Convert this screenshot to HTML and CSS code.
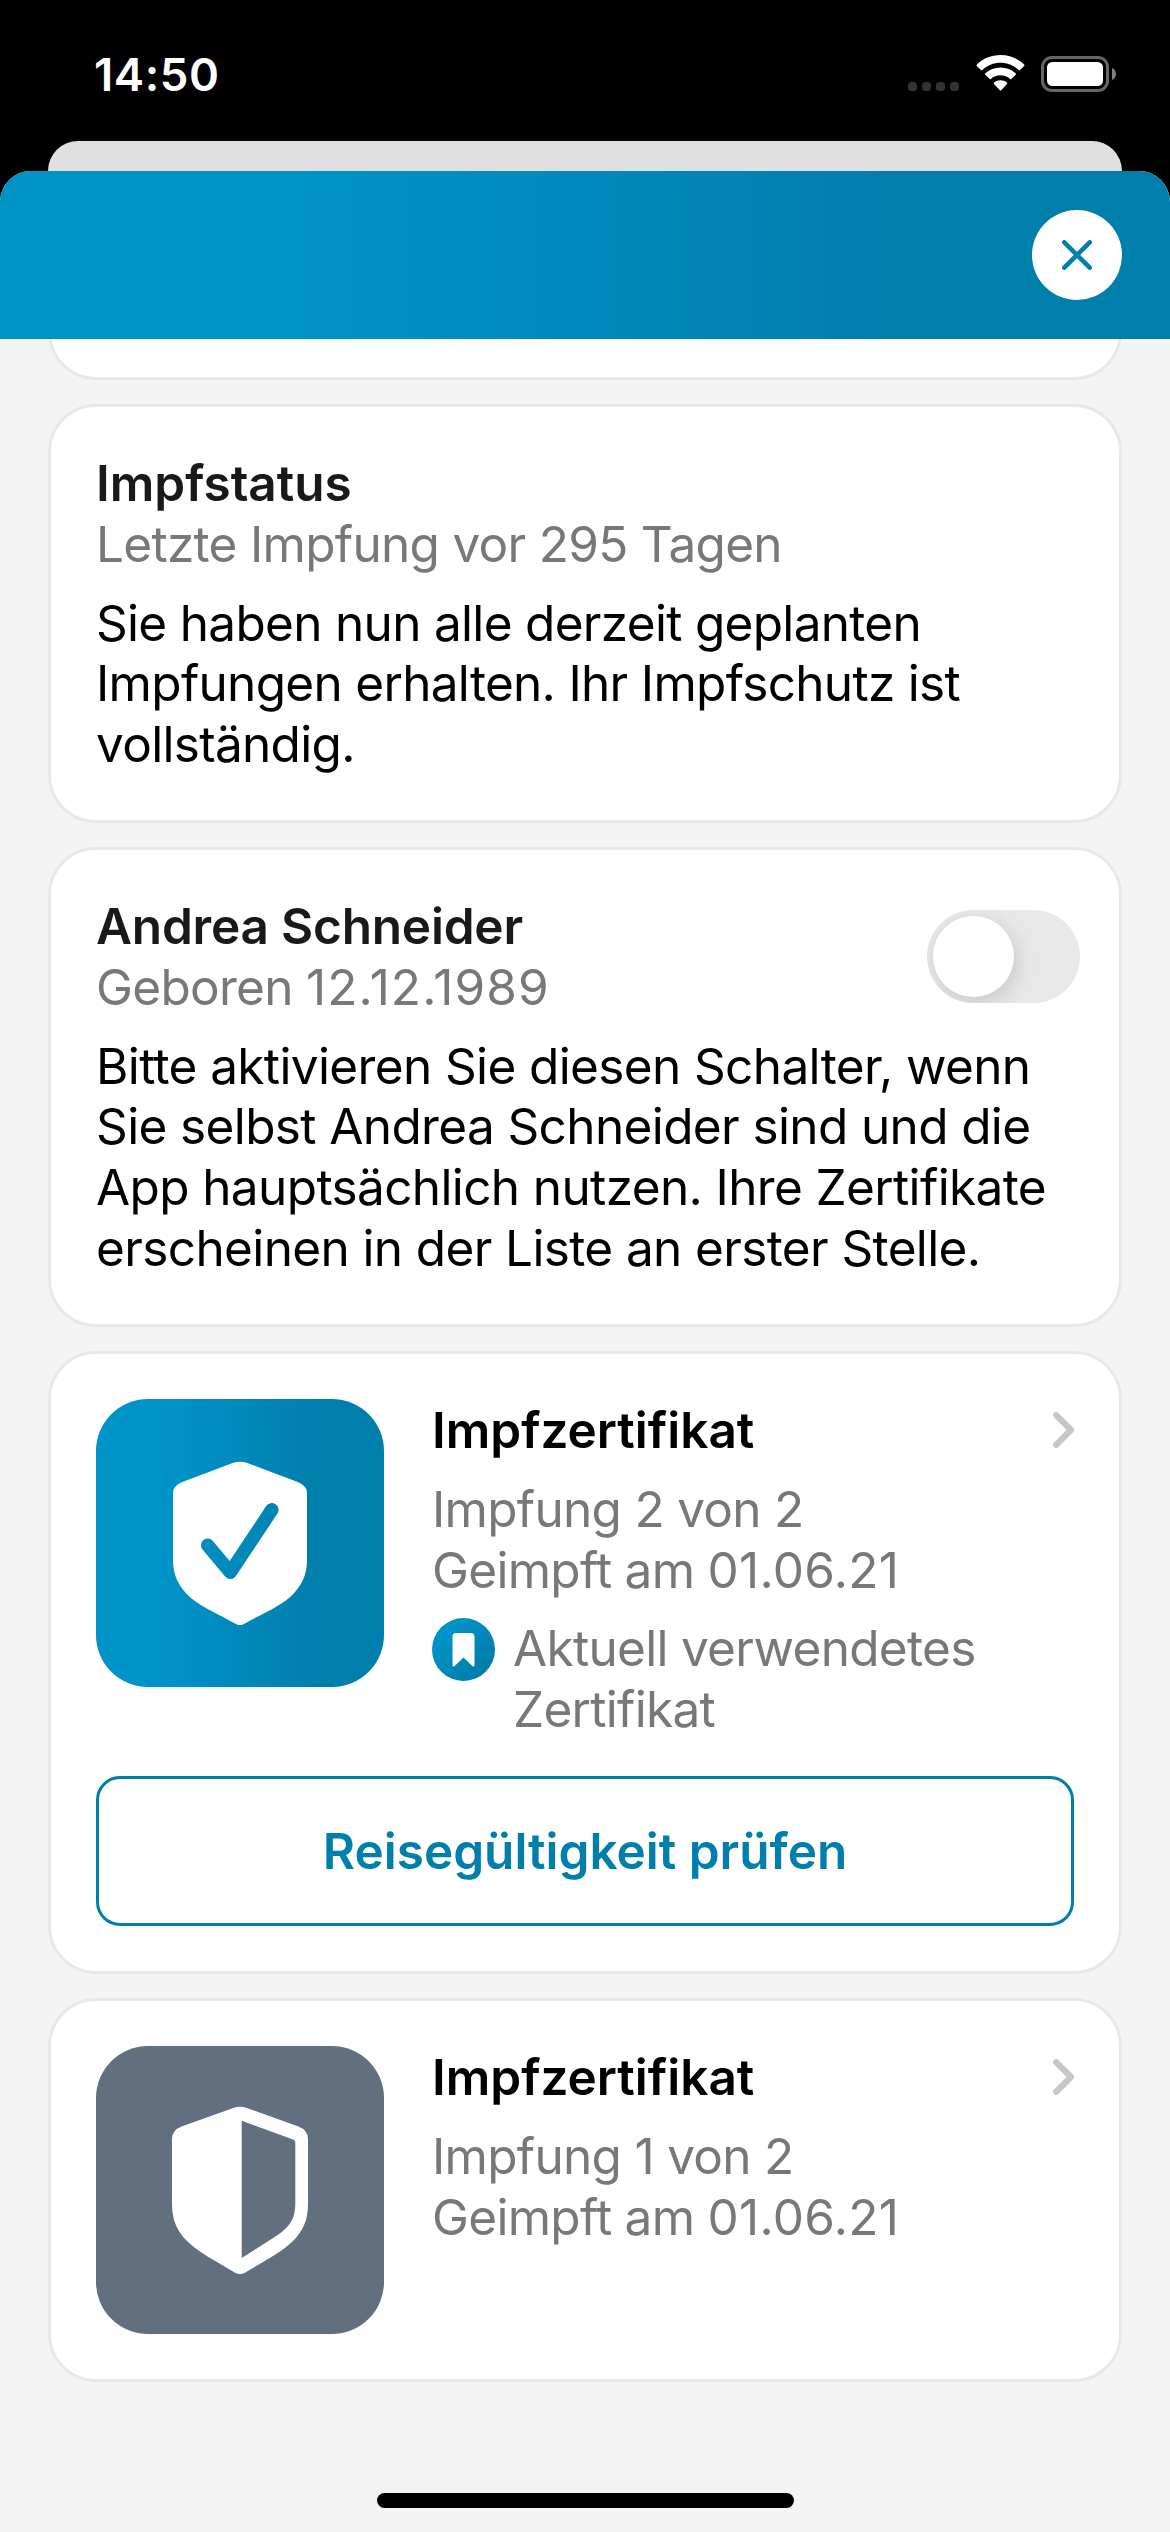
FILE: index.html
```html
<!DOCTYPE html>
<html lang="de">
<head>
<meta charset="utf-8">
<title>Impfstatus</title>
<link rel="stylesheet" href="styles.css">
</head>
<body>
<div class="screen">
  <header class="statusbar">
    <span class="clock">14:50</span>
    <div class="indicators">
      <svg class="signal" width="51" height="36" viewBox="0 0 51 36" fill="#333">
        <rect x="0" y="27" width="9" height="9" rx="3.5"/>
        <rect x="14" y="27" width="9" height="9" rx="3.5"/>
        <rect x="28" y="27" width="9" height="9" rx="3.5"/>
        <rect x="42" y="27" width="9" height="9" rx="3.5"/>
      </svg>
      <svg class="wifi" width="49" height="37" viewBox="0 0 49 37" fill="#fff">
        <path d="M24.500 7.800C31.500 7.800 37.800 10.500 42.600 15Q43.400 15.700 44.100 15L48.200 10.900Q48.900 10.200 48.100 9.400C42 3.500 33.700 0 24.500 0S7 3.500 .9 9.400Q.1 10.200 .8 10.900L4.900 15Q5.600 15.700 6.400 15C11.200 10.500 17.500 7.800 24.500 7.800Z"/>
        <path d="M24.500 20.300C28.200 20.300 31.500 21.700 34.100 23.900Q34.900 24.500 35.600 23.800L39.700 19.700Q40.400 19 39.600 18.300C35.600 14.700 30.300 12.600 24.500 12.600S13.400 14.700 9.400 18.300Q8.600 19 9.300 19.700L13.400 23.800Q14.100 24.500 14.900 23.900C17.500 21.700 20.800 20.300 24.500 20.300Z"/>
        <path d="M31 28.900Q31.700 28.200 30.900 27.500C29.100 26 26.900 25.200 24.500 25.200S19.900 26 18.100 27.500Q17.300 28.200 18 28.900L23.800 35.200Q24.500 36 25.200 35.200Z"/>
      </svg>
      <svg class="battery" width="75" height="36" viewBox="0 0 75 36">
        <rect x="1.500" y="1.500" width="65" height="33" rx="9.500" fill="none" stroke="#666" stroke-width="3"/>
        <rect x="6" y="6" width="56" height="24" rx="5.500" fill="#fff"/>
        <path d="M71 12C76.300 14 76.300 22 71 24Z" fill="#808080"/>
      </svg>
    </div>
  </header>
  <div class="backsheet"></div>

  <div class="sheet">
    <div class="sheet-bar">
      <button class="close" aria-label="Schließen">
        <svg width="30" height="30" viewBox="0 0 30 30"><path d="M2.300 2.300L27.700 27.700M27.700 2.300L2.300 27.700" stroke="#007fad" stroke-width="4.500" stroke-linecap="round"/></svg>
      </button>
    </div>

    <main class="content">
      <section class="card scrolled"></section>

      <section class="card status">
        <h2>Impfstatus</h2>
        <p class="sub">Letzte Impfung vor 295 Tagen</p>
        <p class="copy">Sie haben nun alle derzeit geplanten<br>Impfungen erhalten. Ihr Impfschutz ist<br>vollständig.</p>
      </section>

      <section class="card person">
        <div class="person-head">
          <div>
            <h2>Andrea Schneider</h2>
            <p class="sub">Geboren <span class="date">12.12.1989</span></p>
          </div>
          <div class="toggle" role="switch" aria-checked="false"><div class="knob"></div></div>
        </div>
        <p class="copy">Bitte aktivieren Sie diesen Schalter, wenn<br>Sie selbst Andrea Schneider sind und die<br>App hauptsächlich nutzen. Ihre Zertifikate<br>erscheinen in der Liste an erster Stelle.</p>
      </section>

      <section class="card cert cert-current">
        <div class="cert-row">
          <div class="tile tile-blue">
            <svg width="288" height="288" viewBox="0 0 288 288">
              <mask id="check">
                <rect width="288" height="288" fill="#fff"/>
                <path d="M111.700 146.200L134.300 173.300L175.800 110.800" fill="none" stroke="#000" stroke-width="13.500" stroke-linecap="round" stroke-linejoin="round"/>
              </mask>
              <path mask="url(#check)" fill="#fff" d="M137.300 63.700Q144 61.800 150.700 63.700L202.300 83.300Q211 87 211 94.300V161C211 177 205 186.500 197.300 195C186 206.500 168 214 147.500 225.200Q144 227 140.500 225.200C120 214 102 206.500 90.700 195C83 186.500 77 177 77 161V94.300Q77 87 85.700 83.300Z"/>
            </svg>
          </div>
          <div class="info">
            <div class="info-head">
              <h2>Impfzertifikat</h2>
              <svg class="chevron" width="21" height="36" viewBox="0 0 21 36"><path d="M3.200 3.200L18 18L3.200 32.800" fill="none" stroke="#c7c7c7" stroke-width="6.200" stroke-linecap="round" stroke-linejoin="round"/></svg>
            </div>
            <p class="sub">Impfung 2 von 2<br>Geimpft am <span class="date">01.06.21</span></p>
            <div class="current">
              <span class="badge">
                <svg width="63" height="63" viewBox="0 0 63 63"><path fill="#fff" d="M24 15H39Q42.500 15 42.500 18.500V47.500Q42.200 49.200 40.600 48.200L31.500 39.500L22.400 48.200Q20.800 49.200 20.500 47.500V18.500Q20.500 15 24 15Z"/></svg>
              </span>
              <p class="sub">Aktuell verwendetes<br>Zertifikat</p>
            </div>
          </div>
        </div>
        <button class="action">Reisegültigkeit prüfen</button>
      </section>

      <section class="card cert">
        <div class="cert-row">
          <div class="tile tile-gray">
            <svg width="288" height="288" viewBox="0 0 288 288">
              <path fill="#fff" fill-rule="evenodd" d="M137.300 62Q144 59.600 150.700 62L202.500 80.600Q212 84.300 212 93V158C212 176 205.500 186 198 194C186 206.500 168 215 148.500 227Q144 229.200 139.500 227C120 215 102 206.500 90 194C82.500 186 76 176 76 158V93Q76 84.300 85.500 80.600ZM145.700 74.700V212L181 189.500C193 181.500 199.300 173 199.300 158V96.500Q199.300 94.200 197 93.400Z"/>
            </svg>
          </div>
          <div class="info">
            <div class="info-head">
              <h2>Impfzertifikat</h2>
              <svg class="chevron" width="21" height="36" viewBox="0 0 21 36"><path d="M3.200 3.200L18 18L3.200 32.800" fill="none" stroke="#c7c7c7" stroke-width="6.200" stroke-linecap="round" stroke-linejoin="round"/></svg>
            </div>
            <p class="sub">Impfung 1 von 2<br>Geimpft am <span class="date">01.06.21</span></p>
          </div>
        </div>
      </section>
    </main>

    <div class="home"></div>
  </div>
</div>
</body>
</html>
```
FILE: styles.css
```css
* { box-sizing: border-box; }

body {
  margin: 0;
  background: #000;
  font-family: Inter, "Liberation Sans", sans-serif;
}

h2, p { margin: 0; }

button {
  padding: 0;
  font: inherit;
  background: none;
  border: 0;
}

svg { display: block; }

.screen {
  display: flex;
  flex-direction: column;
  width: 1170px;
  height: 2532px;
  overflow: hidden;
}

/* Status bar */
.statusbar {
  display: flex;
  justify-content: space-between;
  height: 141px;
  padding: 47px 54px 0 94px;
  color: #fff;
}

.clock {
  font-size: 45.500px;
  font-weight: 600;
  line-height: 55px;
  letter-spacing: 0.600px;
}

.indicators { display: flex; padding-top: 8px; }
.wifi { margin-left: 17px; }
.battery { margin: 1px 0 0 16px; }

/* Stacked sheets */
.backsheet {
  flex: none;
  height: 30px;
  margin: 0 48px;
  background: #e0e0e0;
  border-radius: 30px 30px 0 0;
}

.sheet {
  flex: 1;
  display: flex;
  flex-direction: column;
  overflow: hidden;
  background: #f4f4f4;
  border-radius: 31px 31px 0 0;
}

.sheet-bar {
  flex: none;
  display: flex;
  align-items: center;
  justify-content: flex-end;
  height: 168px;
  padding: 0 48px;
  background: linear-gradient(90deg, #0093c8 25%, #007fad 75%);
}

.close {
  display: grid;
  place-items: center;
  width: 90px;
  height: 90px;
  background: #fff;
  border-radius: 50%;
}

.content {
  flex: 1;
  display: flex;
  flex-direction: column;
  gap: 24px;
  padding: 0 48px;
  overflow: hidden;
}

/* Cards */
.card {
  flex: none;
  padding: 46px 45px 44px;
  background: #fff;
  border: 3px solid #e8e8e8;
  border-radius: 48px;
}

.scrolled { height: 120px; margin-top: -79px; }
.status { height: 419px; }
.person { height: 480px; }
.cert { min-height: 384px; padding: 45px; }
.cert-current { height: 623px; }

h2, .sub, .copy {
  font-size: 49.500px;
  line-height: 60.800px;
  white-space: nowrap;
}

h2 { font-weight: 600; color: #000; letter-spacing: 0; }
.status h2, .person h2 { color: #18191b; }
.person h2 { letter-spacing: -0.200px; }

.sub { color: #77787a; letter-spacing: -0.700px; }
.copy { margin-top: 18px; color: #000; letter-spacing: -0.620px; }
.status .copy { letter-spacing: -0.690px; }
.date { letter-spacing: 0.300px; }
.person .date { letter-spacing: 1.100px; }

.person-head {
  display: flex;
  justify-content: space-between;
  margin-right: -6px;
}

.toggle {
  width: 153px;
  height: 93px;
  margin-top: 14px;
  padding: 6px;
  overflow: hidden;
  background: #e8e8e8;
  border-radius: 47px;
}

.knob {
  width: 81px;
  height: 81px;
  background: #fff;
  border-radius: 50%;
  box-shadow: 3px 6px 18px rgba(30, 40, 40, 0.160);
}

/* Certificates */
.cert-row { display: flex; gap: 48px; }

.tile {
  flex: none;
  width: 288px;
  height: 288px;
  border-radius: 52px;
}

.tile-blue { background: linear-gradient(90deg, #0093c8 25%, #007fad 75%); }
.tile-gray { background: #626f7f; }

.info { flex: 1; padding-top: 1px; }

.info-head {
  display: flex;
  align-items: center;
  justify-content: space-between;
  margin-bottom: 18px;
}

.current { display: flex; gap: 18px; margin-top: 18px; }

.badge {
  flex: none;
  width: 63px;
  height: 63px;
  background: linear-gradient(135deg, #0093c8 20%, #007fad 80%);
  border-radius: 50%;
}

.action {
  width: 100%;
  height: 150px;
  margin-top: 36px;
  color: #007fad;
  font-size: 49.500px;
  font-weight: 600;
  border: 3px solid #007fad;
  border-radius: 24px;
}

.home {
  flex: none;
  align-self: center;
  width: 417px;
  height: 15px;
  margin: 0 0 24px 1px;
  background: #000;
  border-radius: 8px;
}
```
